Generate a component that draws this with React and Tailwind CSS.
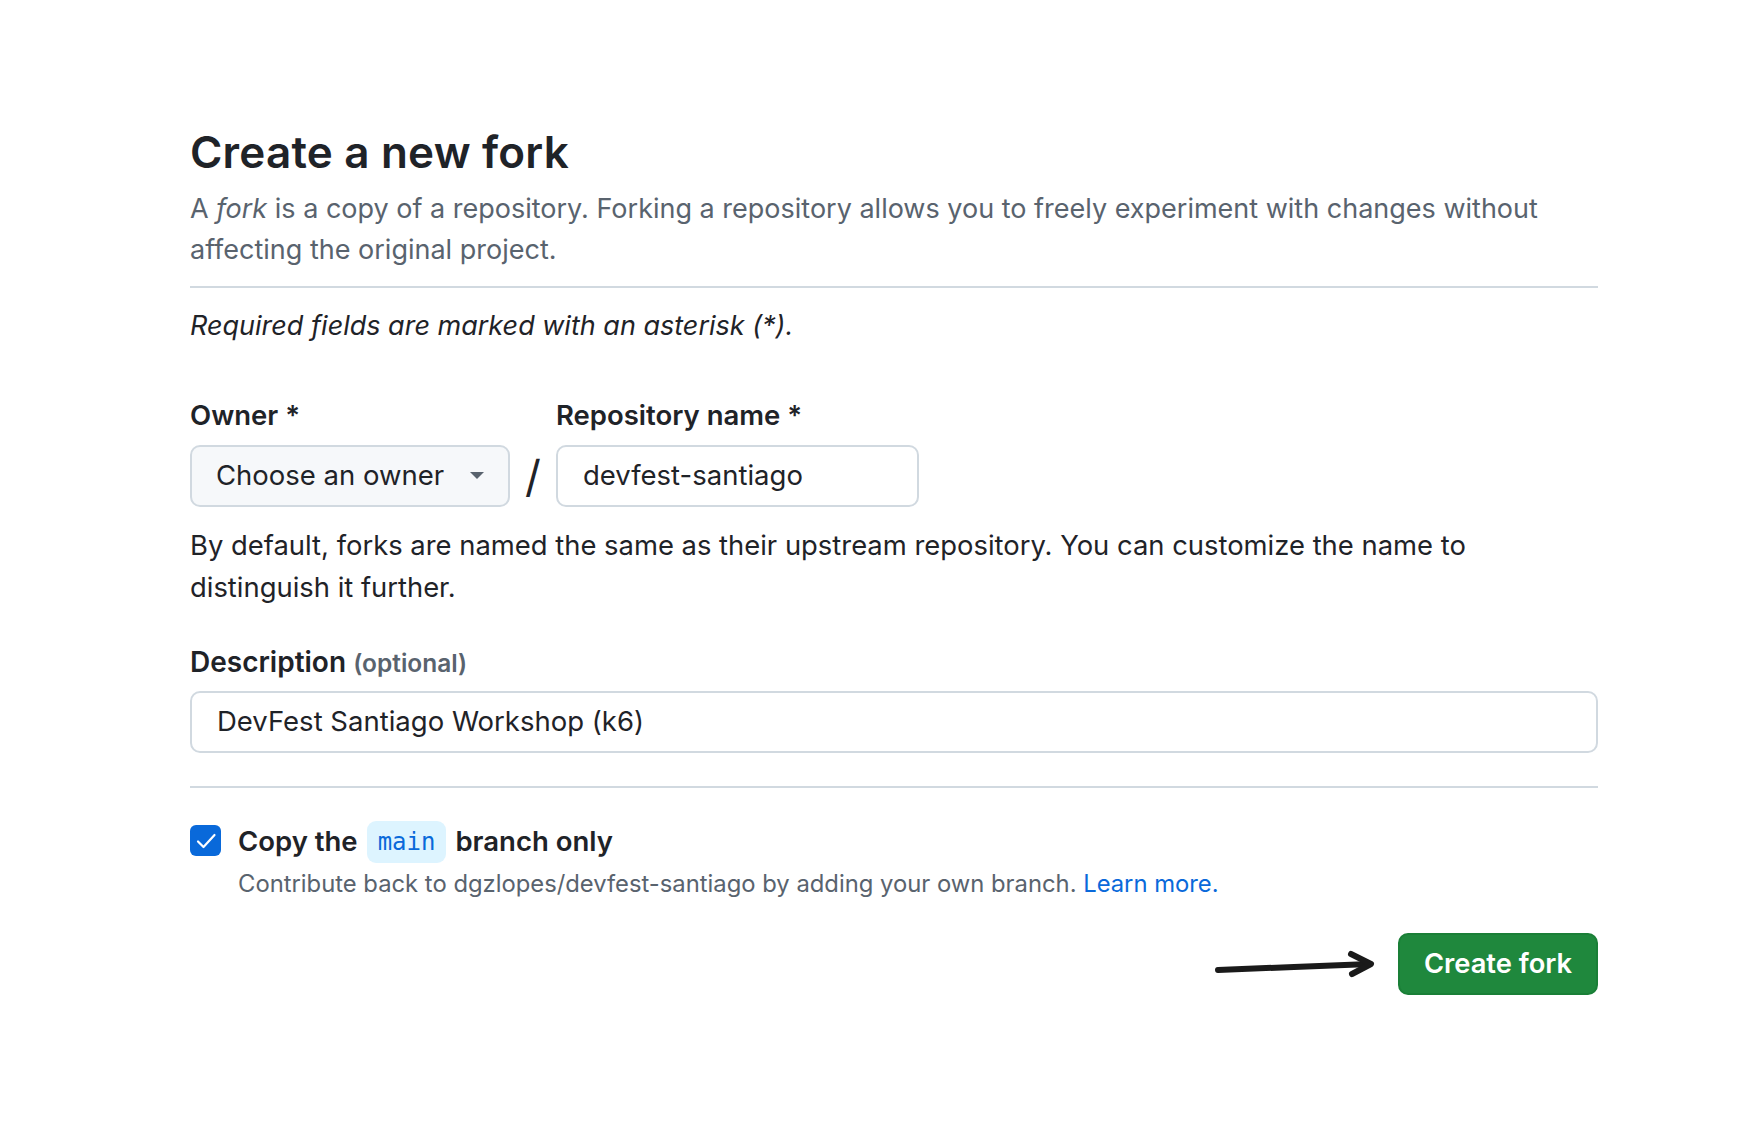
import React from "react";

function Caret() {
  return (
    <svg width="14" height="8" viewBox="0 0 14 8" className="ml-auto">
      <path d="M0 0 L14 0 L7 7 Z" fill="#59636e" />
    </svg>
  );
}

function HandArrow() {
  return (
    <svg width="164" height="34" viewBox="0 0 164 34" fill="none">
      <path
        d="M4 23 C50 21 110 19 156 17"
        stroke="#1a1a1a"
        strokeWidth="6"
        strokeLinecap="round"
      />
      <path
        d="M137 7 L157 17 L138 27"
        stroke="#1a1a1a"
        strokeWidth="6"
        strokeLinecap="round"
        strokeLinejoin="round"
      />
    </svg>
  );
}

export default function App() {
  return (
    <div
      className="min-h-screen bg-white text-[#1f2328]"
      style={{ fontFamily: "Inter, 'Noto Sans', sans-serif" }}
    >
      <div className="ml-[190px] w-[1408px] pt-[127px]">
        <h1 className="text-[44px] font-semibold leading-[50px] tracking-[0.2px]">
          Create a new fork
        </h1>
        <p className="mt-[11px] text-[27px] leading-[41px] text-[#59636e]">
          A <em>fork</em> is a copy of a repository. Forking a repository allows
          you to freely experiment with changes without affecting the original
          project.
        </p>
        <div className="mt-[16px] h-[2px] bg-[#d1d9e0]" />
        <p className="mt-[17px] text-[27px] italic leading-[41px]">
          Required fields are marked with an asterisk (*).
        </p>

        <div className="mt-[54px] flex items-end">
          <div className="flex flex-col">
            <label className="text-[27.5px] font-semibold leading-[30px]">
              Owner *
            </label>
            <div className="mt-[15px] flex h-[62px] w-[320px] items-center rounded-[10px] border-2 border-[#d1d9e0] bg-[#f6f8fa] pl-[24px] pr-[24px] text-[27.5px]">
              <span>Choose an owner</span>
              <Caret />
            </div>
          </div>
          <div className="flex h-[62px] w-[46px] items-center justify-center text-[44px] font-normal">
            /
          </div>
          <div className="flex flex-col">
            <label className="text-[27.5px] font-semibold leading-[30px]">
              Repository name *
            </label>
            <div className="mt-[15px] flex h-[62px] w-[363px] items-center rounded-[10px] border-2 border-[#d1d9e0] bg-white pl-[25px] text-[27.5px]">
              devfest-santiago
            </div>
          </div>
        </div>

        <p className="mt-[17px] text-[27.4px] leading-[42px]">
          By default, forks are named the same as their upstream repository. You
          can customize the name to distinguish it further.
        </p>

        <label className="mt-[39px] block text-[28px] font-semibold leading-[30px]">
          Description{" "}
          <span className="text-[24.5px] text-[#59636e]">(optional)</span>
        </label>
        <div className="mt-[13px] flex h-[62px] items-center rounded-[10px] border-2 border-[#d1d9e0] bg-white pl-[25px] text-[27.5px]">
          DevFest Santiago Workshop (k6)
        </div>

        <div className="mt-[33px] h-[2px] bg-[#d1d9e0]" />

        <div className="mt-[33px] flex items-start">
          <div className="mt-[4px] flex h-[31px] w-[31px] items-center justify-center rounded-[6px] bg-[#0969da]">
            <svg width="24" height="24" viewBox="0 0 24 24" fill="none">
              <path
                d="M4 12.5 L9.5 18 L20.5 6"
                stroke="white"
                strokeWidth="2.2"
                strokeLinecap="round"
                strokeLinejoin="round"
              />
            </svg>
          </div>
          <div className="ml-[17px] flex flex-col">
            <div className="flex h-[42px] items-center text-[27.5px] font-semibold">
              <span>Copy the</span>
              <code
                className="mx-[9px] flex h-[42px] items-center rounded-[9px] bg-[#ddf4ff] px-[11px] text-[24px] font-normal text-[#0969da]"
                style={{ fontFamily: "'DejaVu Sans Mono', 'Liberation Mono', monospace" }}
              >
                main
              </code>
              <span>branch only</span>
            </div>
            <p className="mt-[6px] text-[23.8px] leading-[30px] text-[#59636e]">
              Contribute back to dgzlopes/devfest-santiago by adding your own
              branch. <a className="text-[#0969da]">Learn more.</a>
            </p>
          </div>
        </div>

        <div className="mt-[34px] flex items-center justify-end gap-[20px]">
          <HandArrow />
          <button className="flex h-[62px] w-[200px] items-center justify-center rounded-[10px] border-2 border-[#1a7f37] bg-[#1f883d] text-[27.3px] font-semibold text-white">
            Create fork
          </button>
        </div>
      </div>
    </div>
  );
}
